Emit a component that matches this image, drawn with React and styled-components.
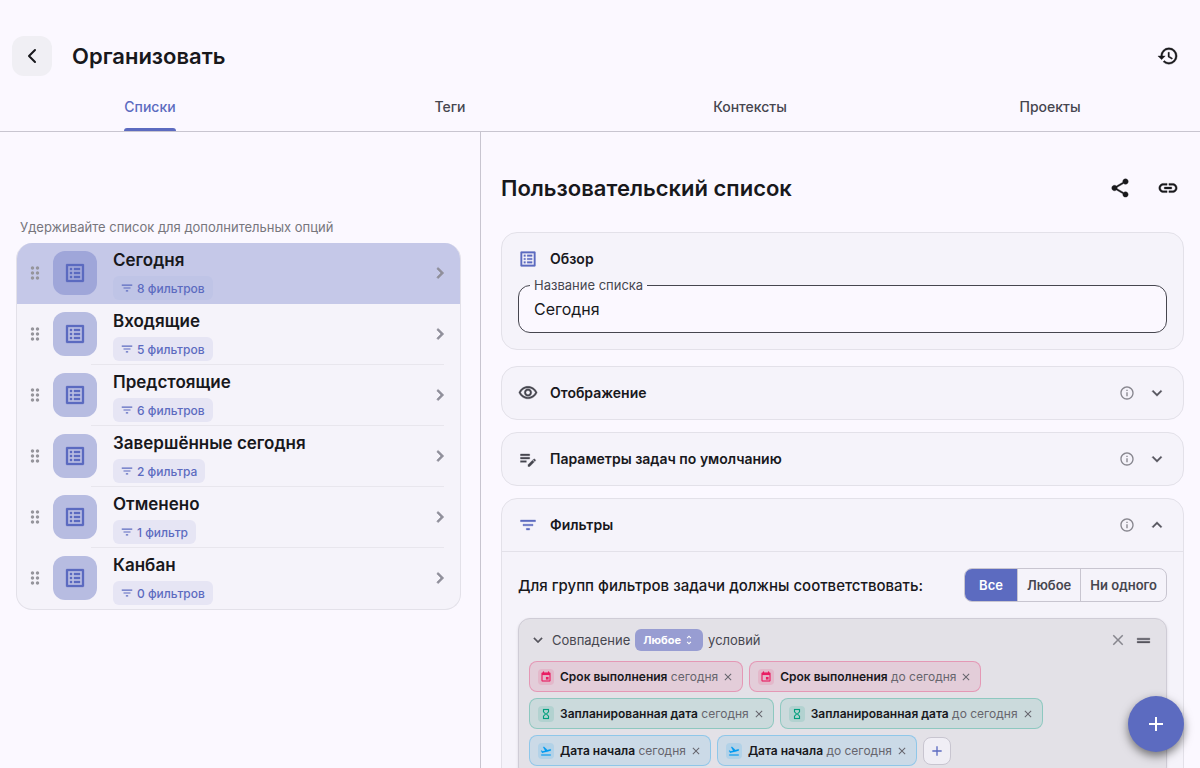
import React, { useState } from "react";
import styled, { createGlobalStyle } from "styled-components";
import { ChevronLeft } from "lucide-react";
import {
	MdAdd,
	MdChevronRight,
	MdClose,
	MdDragHandle,
	MdDragIndicator,
	MdEditNote,
	MdEvent,
	MdExpandLess,
	MdExpandMore,
	MdFilterList,
	MdFlightTakeoff,
	MdHistory,
	MdHourglassEmpty,
	MdInfoOutline,
	MdLink,
	MdListAlt,
	MdOutlineVisibility,
	MdShare,
	MdUnfoldMore,
} from "react-icons/md";

const tabs = ["Списки", "Теги", "Контексты", "Проекты"];

const lists = [
	{ name: "Сегодня", filters: "8 фильтров" },
	{ name: "Входящие", filters: "5 фильтров" },
	{ name: "Предстоящие", filters: "6 фильтров" },
	{ name: "Завершённые сегодня", filters: "2 фильтра" },
	{ name: "Отменено", filters: "1 фильтр" },
	{ name: "Канбан", filters: "0 фильтров" },
];

const kinds = {
	due: { name: "Срок выполнения", rgb: "233, 30, 99", icon: MdEvent },
	plan: { name: "Запланированная дата", rgb: "0, 160, 125", icon: MdHourglassEmpty },
	start: { name: "Дата начала", rgb: "3, 155, 240", icon: MdFlightTakeoff },
};

const conditions = [
	{ kind: "due", value: "сегодня" },
	{ kind: "due", value: "до сегодня" },
	{ kind: "plan", value: "сегодня" },
	{ kind: "plan", value: "до сегодня" },
	{ kind: "start", value: "сегодня" },
	{ kind: "start", value: "до сегодня" },
];

const matchOptions = ["Все", "Любое", "Ни одного"];

const Section = ({ icon, title, accent, open, children }) => {
	return (
		<Card>
			<SectionHead $accent={accent} $line={open}>
				{icon}
				<h3>{title}</h3>
				<SmallButton aria-label="Справка">
					<MdInfoOutline size={16} />
				</SmallButton>
				<SmallButton $dark aria-label="Развернуть" aria-expanded={!!open}>
					{open ? <MdExpandLess size={20} /> : <MdExpandMore size={20} />}
				</SmallButton>
			</SectionHead>
			{children}
		</Card>
	);
};

const Condition = ({ kind, value }) => {
	const { name, rgb, icon: Icon } = kinds[kind];
	return (
		<ConditionChip $rgb={rgb}>
			<span className="icon">
				<Icon size={12} />
			</span>
			<p>
				<strong>{name}</strong> {value}
			</p>
			<button aria-label="Удалить">
				<MdClose size={12} />
			</button>
		</ConditionChip>
	);
};

const App = () => {
	const [tab, setTab] = useState("Списки");
	const [current, setCurrent] = useState("Сегодня");
	const [name, setName] = useState("Сегодня");
	const [match, setMatch] = useState("Все");

	return (
		<Page>
			<GlobalStyle />
			<Header>
				<BackButton aria-label="Назад">
					<ChevronLeft size={24} />
				</BackButton>
				<h1>Организовать</h1>
				<IconButton aria-label="История">
					<MdHistory size={22} />
				</IconButton>
			</Header>
			<Tabs>
				{tabs.map((item) => (
					<Tab key={item} $active={item === tab} onClick={() => setTab(item)}>
						<span>{item}</span>
					</Tab>
				))}
			</Tabs>
			<Content>
				<Sidebar>
					<Hint>Удерживайте список для дополнительных опций</Hint>
					<Lists>
						{lists.map((item) => (
							<ListRow key={item.name}>
								<ListButton
									$active={item.name === current}
									onClick={() => setCurrent(item.name)}
								>
									<MdDragIndicator size={20} className="drag" />
									<span className="tile">
										<MdListAlt size={24} />
									</span>
									<span className="text">
										<b>{item.name}</b>
										<span className="count">
											<MdFilterList size={14} />
											{item.filters}
										</span>
									</span>
									<MdChevronRight size={22} className="arrow" />
								</ListButton>
							</ListRow>
						))}
					</Lists>
				</Sidebar>
				<Details>
					<DetailsHead>
						<h2>Пользовательский список</h2>
						<IconButton aria-label="Поделиться">
							<MdShare size={22} />
						</IconButton>
						<IconButton aria-label="Ссылка">
							<MdLink size={22} />
						</IconButton>
					</DetailsHead>
					<Overview>
						<OverviewHead>
							<MdListAlt size={20} />
							<h3>Обзор</h3>
						</OverviewHead>
						<Field>
							<legend>
								<label htmlFor="list-name">Название списка</label>
							</legend>
							<input
								id="list-name"
								value={name}
								onChange={(e) => setName(e.target.value)}
							/>
						</Field>
					</Overview>
					<Sections>
						<Section icon={<MdOutlineVisibility size={20} />} title="Отображение" />
						<Section
							icon={<MdEditNote size={22} />}
							title="Параметры задач по умолчанию"
						/>
						<Section icon={<MdFilterList size={20} />} title="Фильтры" accent open>
							<Filters>
								<MatchRow>
									<p>Для групп фильтров задачи должны соответствовать:</p>
									<Segmented>
										{matchOptions.map((item) => (
											<Segment
												key={item}
												$active={item === match}
												onClick={() => setMatch(item)}
											>
												{item}
											</Segment>
										))}
									</Segmented>
								</MatchRow>
								<Group>
									<GroupHead>
										<SmallButton $dark aria-label="Свернуть">
											<MdExpandMore size={18} />
										</SmallButton>
										<span>Совпадение</span>
										<MatchButton>
											Любое
											<MdUnfoldMore size={12} />
										</MatchButton>
										<span>условий</span>
										<div className="actions">
											<SmallButton aria-label="Удалить группу">
												<MdClose size={18} />
											</SmallButton>
											<SmallButton $dark aria-label="Переместить группу">
												<MdDragHandle size={19} />
											</SmallButton>
										</div>
									</GroupHead>
									<Conditions>
										{conditions.map((item) => (
											<Condition key={item.kind + item.value} {...item} />
										))}
										<AddCondition aria-label="Добавить условие">
											<MdAdd size={16} />
										</AddCondition>
									</Conditions>
								</Group>
							</Filters>
						</Section>
					</Sections>
				</Details>
			</Content>
			<Fab aria-label="Создать">
				<MdAdd size={24} />
			</Fab>
		</Page>
	);
};

// # STYLED COMPONENT

const GlobalStyle = createGlobalStyle`
	* {
		box-sizing: border-box;
		margin: 0;
		padding: 0;
	}
	body {
		background: #fbf8ff;
		color: #18181c;
		font-family: Inter, "Liberation Sans", sans-serif;
	}
	button {
		border: none;
		background: none;
		color: inherit;
		font-family: inherit;
		cursor: pointer;
	}
	svg {
		display: block;
		flex-shrink: 0;
	}
	/* bounding box of the material icons */
	svg path[fill="none"][d^="M0 0"] {
		stroke: none;
	}
`;

const Page = styled.div`
	height: 100vh;
	display: flex;
	flex-direction: column;
	overflow: hidden;
`;

const Header = styled.header`
	display: flex;
	align-items: center;
	padding: 36px 16px 8px 12px;

	h1 {
		flex: 1;
		margin-left: 20px;
		font-size: 22px;
		font-weight: 600;
		line-height: 32px;
	}
`;

const BackButton = styled.button`
	width: 40px;
	height: 40px;
	display: grid;
	place-items: center;
	border-radius: 12px;
	background: #f0eff4;
`;

const IconButton = styled.button`
	width: 32px;
	height: 32px;
	display: grid;
	place-items: center;

	svg {
		stroke-width: 0.4;
	}
`;

const Tabs = styled.nav`
	display: flex;
	border-bottom: 1px solid #c8c5d0;
`;

const Tab = styled.button`
	flex: 1;
	display: flex;
	justify-content: center;
	font-size: 14px;
	font-weight: 500;
	line-height: 46px;
	color: ${(props) => (props.$active ? "#5c6bc0" : "#46464f")};

	span::after {
		content: "";
		display: block;
		height: 3px;
		margin-top: -2px;
		border-radius: 3px 3px 0 0;
		background: ${(props) => (props.$active ? "#5c6bc0" : "transparent")};
	}
`;

const Content = styled.main`
	flex: 1;
	min-height: 0;
	display: grid;
	grid-template-columns: 2fr 3fr;
`;

const Sidebar = styled.aside`
	padding: 86px 19px 0 16px;
	overflow: hidden;
`;

const Hint = styled.p`
	padding: 0 4px;
	font-size: 13px;
	line-height: 18px;
	color: #77767d;
	margin-bottom: 7px;
`;

const Lists = styled.ul`
	list-style: none;
	border: 1px solid #e3e1e9;
	border-top: none;
	border-radius: 16px;
	background: #f5f3fa;
	overflow: hidden;
`;

const ListRow = styled.li`
	&:not(:last-child) > button::after {
		content: "";
		position: absolute;
		left: 74px;
		right: 16px;
		bottom: 0;
		height: 1px;
		background: #e8e6ed;
	}
`;

const ListButton = styled.button`
	position: relative;
	width: 100%;
	height: 61px;
	display: flex;
	align-items: center;
	padding: 0 9px 1px 8px;
	text-align: left;
	background: ${(props) => (props.$active ? "#c5c8e8" : "transparent")};

	&::after {
		opacity: ${(props) => (props.$active ? 0 : 1)};
	}
	.drag {
		color: #96959c;
	}
	.tile {
		width: 44px;
		height: 44px;
		margin: 0 16px 0 8px;
		display: grid;
		place-items: center;
		border-radius: 12px;
		background: ${(props) => (props.$active ? "#9fa6d9" : "#b7bce1")};
		color: #5c6bc0;
	}
	.tile svg {
		stroke-width: 0.3;
	}
	.text {
		flex: 1;
		display: flex;
		flex-direction: column;
		align-items: flex-start;
		gap: 4px;
		padding-top: 2px;
	}
	b {
		font-size: 17px;
		font-weight: 600;
		line-height: 24px;
	}
	.count {
		height: 24px;
		display: flex;
		align-items: center;
		gap: 3px;
		padding: 0 8px 0 7px;
		border-radius: 6px;
		background: ${(props) => (props.$active ? "#bfc4e6" : "#e6e5f4")};
		color: #5c6bc0;
		font-size: 12px;
		font-weight: 500;
	}
	.arrow {
		color: #8f8e9a;
		stroke-width: 0.8;
	}
`;

const Details = styled.section`
	padding: 36px 16px 0 20px;
	border-left: 1px solid #c8c5d0;
	overflow: hidden;
`;

const DetailsHead = styled.div`
	display: flex;
	align-items: center;
	gap: 16px;
	height: 40px;
	margin-bottom: 24px;

	h2 {
		flex: 1;
		font-size: 22px;
		font-weight: 600;
	}
`;

const Card = styled.div`
	border: 1px solid #e3e1e9;
	border-radius: 16px;
	background: #f5f3fa;

	h3 {
		flex: 1;
		font-size: 14px;
		font-weight: 600;
		line-height: 20px;
	}
`;

const Overview = styled(Card)`
	padding: 16px;
`;

const OverviewHead = styled.div`
	display: flex;
	align-items: center;
	gap: 12px;
	color: #5c6bc0;

	svg {
		stroke-width: 0.3;
	}
	h3 {
		color: #18181c;
	}
`;

const Field = styled.fieldset`
	margin-top: 8px;
	border: 1px solid #46464f;
	border-radius: 12px;
	background: #fbf8ff;

	legend {
		margin-left: 11px;
		padding: 0 4px;
		font-size: 13px;
		line-height: 16px;
		color: #46464f;
	}
	input {
		display: block;
		width: 100%;
		height: 39px;
		padding: 0 15px 7px;
		border: none;
		outline: none;
		background: none;
		font: 16px Inter, "Liberation Sans", sans-serif;
		color: #18181c;
	}
`;

const Sections = styled.div`
	display: flex;
	flex-direction: column;
	gap: 12px;
	margin-top: 16px;
`;

const SectionHead = styled.div`
	height: 52px;
	display: flex;
	align-items: center;
	padding: 0 16px;
	color: ${(props) => (props.$accent ? "#5c6bc0" : "#46464f")};
	box-shadow: ${(props) => (props.$line ? "0 1px 0 #e3e1e9" : "none")};

	> svg {
		width: 20px;
		stroke-width: 0.4;
	}
	h3 {
		margin-left: 12px;
		color: #18181c;
	}
	button + button {
		margin-left: 10px;
	}
`;

const SmallButton = styled.button`
	width: 20px;
	height: 20px;
	display: grid;
	place-items: center;
	color: ${(props) => (props.$dark ? "#55545d" : "#87868e")};

	svg {
		stroke-width: ${(props) => (props.$dark ? "0.4" : "0")};
	}
`;

const Filters = styled.div`
	padding: 17px 16px 16px;
`;

const MatchRow = styled.div`
	display: flex;
	align-items: center;
	justify-content: space-between;
	gap: 16px;

	p {
		font-size: 15px;
		font-weight: 500;
	}
`;

const Segmented = styled.div`
	display: flex;
	border: 1px solid #c8c5d0;
	border-radius: 8px;
	overflow: hidden;
`;

const Segment = styled.button`
	height: 32px;
	padding: 0 ${(props) => (props.$active ? "14px" : "9px")};
	font-size: 13px;
	font-weight: 600;
	background: ${(props) => (props.$active ? "#5c6bc0" : "transparent")};
	color: ${(props) => (props.$active ? "#fff" : "#46464f")};

	& + & {
		border-left: 1px solid #c8c5d0;
	}
`;

const Group = styled.div`
	margin-top: 16px;
	padding: 10px 10px 12px;
	border: 1px solid #cfccd6;
	border-radius: 12px;
	background: #e3e1e7;
	box-shadow: 0 1px 3px rgba(0, 0, 0, 0.1);
`;

const GroupHead = styled.div`
	display: flex;
	align-items: center;
	gap: 5px;
	font-size: 13px;
	color: #46464f;

	> button:first-child {
		width: 18px;
	}
	.actions {
		display: flex;
		gap: 5px;
		margin-left: auto;
		margin-right: 3px;
	}
`;

const MatchButton = styled.button`
	height: 22px;
	display: flex;
	align-items: center;
	gap: 2px;
	padding: 0 8px;
	border-radius: 6px;
	background: #989dd2;
	color: #fff;
	font-size: 11px;
	font-weight: 700;
`;

const Conditions = styled.div`
	display: flex;
	flex-wrap: wrap;
	align-items: center;
	gap: 6px;
	margin-top: 10px;
`;

const ConditionChip = styled.div`
	height: 31px;
	display: flex;
	align-items: center;
	padding: 0 8px;
	border: 1px solid rgba(${(props) => props.$rgb}, 0.3);
	border-radius: 8px;
	background: rgba(${(props) => props.$rgb}, 0.1);

	.icon {
		width: 16px;
		height: 16px;
		display: grid;
		place-items: center;
		border-radius: 4px;
		background: rgba(${(props) => props.$rgb}, 0.12);
		color: rgb(${(props) => props.$rgb});
	}
	.icon svg {
		stroke-width: 0.3;
	}
	p {
		margin: 0 4px 0 6px;
		font-size: 12px;
		color: #66656d;
	}
	strong {
		font-weight: 600;
		color: #18181c;
	}
	button {
		color: #66656d;
	}
`;

const AddCondition = styled.button`
	width: 28px;
	height: 28px;
	display: grid;
	place-items: center;
	border: 1px solid #c8c5d0;
	border-radius: 8px;
	background: #f0eef5;
	color: #5c6bc0;
`;

const Fab = styled.button`
	position: fixed;
	right: 16px;
	bottom: 16px;
	width: 56px;
	height: 56px;
	display: grid;
	place-items: center;
	border-radius: 50%;
	background: #5c6bc0;
	color: #fff;
	box-shadow: 0 4px 10px rgba(0, 0, 0, 0.5);
`;

export default App;
